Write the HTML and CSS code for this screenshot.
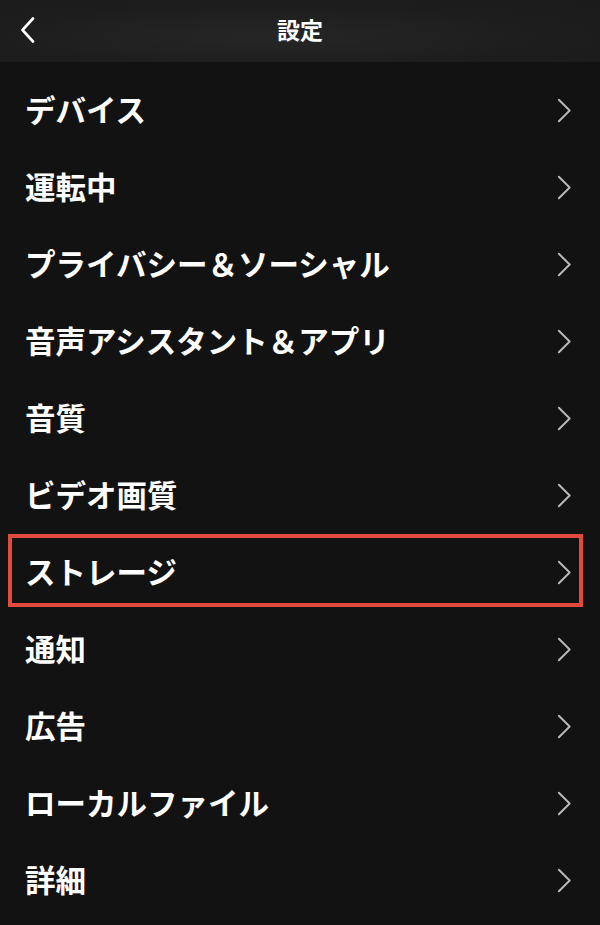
FILE: index.html
```html
<!DOCTYPE html>
<html lang="ja">
  <head>
    <meta charset="UTF-8" />
    <meta name="viewport" content="width=device-width, initial-scale=1.0" />
    <title>設定</title>
    <link rel="stylesheet" href="styles.css">
  </head>
  <body>
    <header class="topbar">
      <span class="back">
        <svg width="16" height="26" viewBox="0 0 16 26"><path d="M13 1.5 L2.5 13 L13 24.5" fill="none" stroke="#fff" stroke-width="2.6" stroke-linecap="round" stroke-linejoin="round"/></svg>
      </span>
      <h1 class="title">設定</h1>
    </header>

    <ul class="menu">
      <li class="item">デバイス<svg class="chev" viewBox="0 0 16 26"><path d="M2 1.5 L13.5 13 L2 24.5"/></svg></li>
      <li class="item">運転中<svg class="chev" viewBox="0 0 16 26"><path d="M2 1.5 L13.5 13 L2 24.5"/></svg></li>
      <li class="item">プライバシー＆ソーシャル<svg class="chev" viewBox="0 0 16 26"><path d="M2 1.5 L13.5 13 L2 24.5"/></svg></li>
      <li class="item">音声アシスタント＆アプリ<svg class="chev" viewBox="0 0 16 26"><path d="M2 1.5 L13.5 13 L2 24.5"/></svg></li>
      <li class="item">音質<svg class="chev" viewBox="0 0 16 26"><path d="M2 1.5 L13.5 13 L2 24.5"/></svg></li>
      <li class="item">ビデオ画質<svg class="chev" viewBox="0 0 16 26"><path d="M2 1.5 L13.5 13 L2 24.5"/></svg></li>
      <li class="item marked">ストレージ<svg class="chev" viewBox="0 0 16 26"><path d="M2 1.5 L13.5 13 L2 24.5"/></svg></li>
      <li class="item">通知<svg class="chev" viewBox="0 0 16 26"><path d="M2 1.5 L13.5 13 L2 24.5"/></svg></li>
      <li class="item">広告<svg class="chev" viewBox="0 0 16 26"><path d="M2 1.5 L13.5 13 L2 24.5"/></svg></li>
      <li class="item">ローカルファイル<svg class="chev" viewBox="0 0 16 26"><path d="M2 1.5 L13.5 13 L2 24.5"/></svg></li>
      <li class="item">詳細<svg class="chev" viewBox="0 0 16 26"><path d="M2 1.5 L13.5 13 L2 24.5"/></svg></li>
    </ul>
  </body>
</html>
```

FILE: styles.css
```css
body {
  margin: 0;
  background: #121212;
  color: #fff;
  font-family: "Noto Sans CJK JP", "Noto Sans", sans-serif;
}

.topbar {
  position: relative;
  height: 62px;
  display: flex;
  align-items: center;
  justify-content: center;
  background: radial-gradient(ellipse at 45% 60%, #262626 0%, #1d1d1d 60%, #1b1b1b 100%);
}

.back {
  position: absolute;
  left: 20px;
  top: 17px;
  display: flex;
}

.title {
  margin: 0;
  font-size: 23px;
  font-weight: 700;
  line-height: 1;
  padding-bottom: 4px;
}

.menu {
  list-style: none;
  margin: 0;
  padding: 10px 0 0;
}

.item {
  position: relative;
  height: 77px;
  box-sizing: border-box;
  display: flex;
  align-items: center;
  justify-content: space-between;
  padding: 0 28px 3px 25px;
  font-size: 30.5px;
  font-weight: 600;
  line-height: 1;
}

.chev {
  width: 15px;
  height: 25px;
  margin-top: 3px;
  fill: none;
  stroke: #b8b8b8;
  stroke-width: 2.1;
  stroke-linecap: round;
  stroke-linejoin: round;
}

.marked::after {
  content: "";
  position: absolute;
  left: 8px;
  right: 17px;
  top: 0;
  bottom: 4px;
  border: 4px solid #e14b3d;
}
```
